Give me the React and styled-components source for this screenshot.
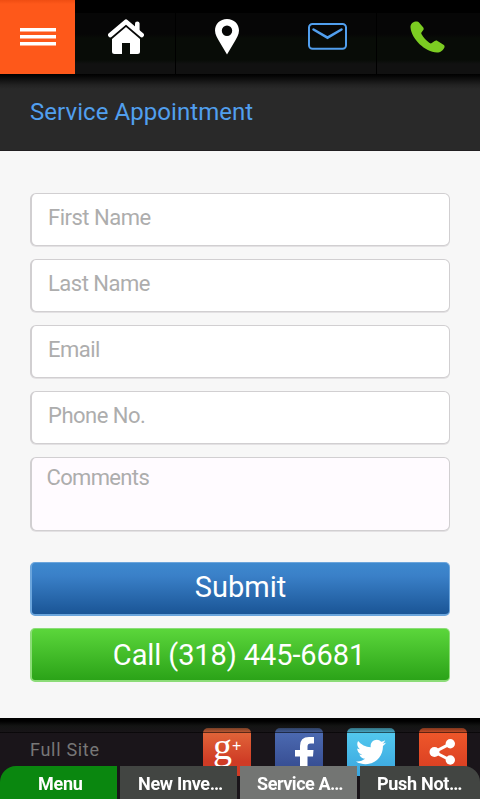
import styled, { createGlobalStyle } from "styled-components"
import { FaTwitter } from "react-icons/fa"

const GlobalStyle = createGlobalStyle`
  * {
    box-sizing: border-box;
  }

  body {
    margin: 0;
    overflow: hidden;
    background: #1a151a;
    font-family: Roboto, "Liberation Sans", sans-serif;
  }
`

const Page = styled.div`
  display: flex;
  flex-direction: column;
  width: 480px;
  height: 799px;
  overflow: hidden;
`

const NavBar = styled.nav`
  display: grid;
  grid-template-columns: 75px 101px 101px 100px 103px;
  height: 74px;
  background: linear-gradient(#000 0 13px, #060606 13px 34px, #080c07 38px 60px, #111 64px 74px);
`

const NavItem = styled.a`
  display: flex;
  justify-content: center;
  padding: ${(props) => props.$pad};
  background: ${(props) => (props.$active ? "linear-gradient(#f04d12, #fe581a 4px)" : "none")};
  border-right: ${(props) => (props.$divider ? "1px solid #000" : "none")};

  svg {
    display: block;
    flex: none;
  }
`

const TitleBar = styled.header`
  height: 77px;
  padding: 22px 30px 0;
  background: linear-gradient(#000 0, #050505 2px, #222 11px, #292929 15px);
  border-bottom: 1px solid #211f21;
`

const Title = styled.h1`
  margin: 0;
  color: #519fee;
  font-size: 24px;
  font-weight: 400;
  line-height: 32px;
  letter-spacing: 0.06px;
`

const Form = styled.form`
  display: flex;
  flex-direction: column;
  height: 567px;
  padding: 42px 30px 0;
  background: #f7f7f7;
`

const Field = styled.input`
  width: 100%;
  height: 53px;
  margin: 0 0 13px;
  padding: 0 16px 5px;
  color: #333;
  background: #fff;
  border: 1px solid #d1cfd1;
  border-left-width: 2px;
  border-radius: 6px;
  box-shadow: 0 1px 0 #e3e1e3;
  font: 400 22px Roboto, sans-serif;
  letter-spacing: -0.5px;
  outline: none;

  &::placeholder {
    color: #adadad;
    opacity: 1;
  }
`

const CommentsField = styled(Field).attrs({ as: "textarea" })`
  display: block;
  height: 74px;
  margin-bottom: 31px;
  padding: 7px 14px 7px 14.5px;
  background: #fffbff;
  letter-spacing: -0.65px;
  resize: none;
`

const Button = styled.button`
  width: 100%;
  height: 54px;
  margin-bottom: 12px;
  padding: ${(props) => props.$pad};
  color: #fff;
  background: ${(props) => props.$fill};
  border: 1px solid ${(props) => props.$edge};
  border-left-width: 2px;
  border-bottom-width: 2px;
  border-radius: 5px;
  font: 400 29px Roboto, sans-serif;
  letter-spacing: ${(props) => props.$spacing}px;
`

const Footer = styled.footer`
  position: relative;
  display: flex;
  justify-content: space-between;
  flex: 1;
  padding: 10px 13px 0 30px;
  background: #1a151a;

  /* inner shadow falling over the links */
  &::before {
    content: "";
    position: absolute;
    z-index: 1;
    inset: 0 0 auto;
    height: 15px;
    background: linear-gradient(#000 0, #000 3px, rgba(16, 20, 16, 0.65) 8px, rgba(16, 20, 16, 0.2) 14px, #0009 14px);
  }
`

const FullSite = styled.a`
  padding-top: 10px;
  color: #777;
  font-size: 18px;
  line-height: 24px;
  letter-spacing: 0.7px;
`

const SocialLinks = styled.div`
  display: flex;
  gap: 24px;
`

const SocialLink = styled.a`
  display: flex;
  justify-content: ${(props) => props.$align || "center"};
  width: 48px;
  height: 48px;
  padding: ${(props) => props.$pad || "0"};
  color: #fff;
  background: linear-gradient(${(props) => props.$fill});
  border-radius: 5px;

  svg {
    flex: none;
  }
`

const GooglePlus = styled.span`
  display: flex;
  height: 36px;
  font: 38px/29px "Liberation Serif", serif;
`

const Plus = styled.span`
  font: 16px/28px "Liberation Sans", sans-serif;
`

const TabBar = styled.div`
  position: fixed;
  z-index: 2;
  top: 766px;
  left: 0;
  display: grid;
  grid-template-columns: 117px 117px 117px 120px;
  gap: 3px;
  width: 480px;
  height: 33px;
`

const Tab = styled.a`
  padding-left: ${(props) => props.$indent}px;
  color: #fff;
  background: ${(props) => props.$color};
  border-radius: ${(props) => props.$radius || "0"};
  font-size: 18px;
  font-weight: 700;
  line-height: 35px;
  letter-spacing: ${(props) => props.$spacing}px;
  white-space: nowrap;
`

const MenuIcon = () => (
  <svg width="36" height="18" viewBox="0 0 36 18">
    <path d="M0 0h36v3.4H0zM0 7h36v3.4H0zM0 14h36v3.4H0z" fill="#fff" />
  </svg>
)

const HomeIcon = () => (
  <svg width="36" height="36" viewBox="0 0 36 36" fill="#fff">
    <path d="M27 12V4.500Q27 2.500 29.300 2.500T31.600 4.500V16z" />
    <path d="M2.300 16 18 2.700 33.700 16" fill="none" stroke="#fff" strokeWidth="4.500" strokeLinecap="round" strokeLinejoin="round" />
    <path d="M18 8 32 20V32.500q0 2.500-2.500 2.500H22V24h-8v11H6.500Q4 35 4 32.500V20z" />
  </svg>
)

const PinIcon = () => (
  <svg width="24" height="36" viewBox="0 0 24 36">
    <path
      d="M12 0C5 0 0 5 0 11.500 0 16 2.500 19 4 22l8 13.500L20 22c1.500-3 4-6 4-10.500C24 5 19 0 12 0zm0 6.500a5.200 5.200 0 1 1 0 10.400 5.200 5.200 0 0 1 0-10.400z"
      fill="#fff"
      fillRule="evenodd"
    />
  </svg>
)

const MailIcon = () => (
  <svg width="39" height="27" viewBox="0 0 39 27" fill="none" stroke="#519fee">
    <rect x="1" y="1" width="37" height="24.700" rx="3.500" strokeWidth="2" />
    <path d="M5.500 6.500 19.500 14.700 33.500 6.500" strokeWidth="2.500" strokeLinecap="round" />
  </svg>
)

const PhoneIcon = () => (
  <svg width="35" height="32" viewBox="0 0 35 32">
    <path
      d="M5.500.5C2.500.8.300 3.500.500 6.500 1.500 18 15 31 27 31.500c3 .1 6.500-2.200 7.500-5.300.3-1-.1-1.700-1-2.400L27.500 20c-1-.6-2-.5-2.800.1l-2.900 2c-.8.500-1.500.3-2.200-.2-3.500-2.500-6-5.200-8-8.600-.5-.9-.4-1.500.2-2.300l1.500-2c.6-.8.500-1.600 0-2.500L9 1.500C8.200.400 7 .300 5.500.5z"
      fill="#7ccc22"
    />
  </svg>
)

const FacebookIcon = () => (
  <svg width="19" height="39" viewBox="0 0 19 39" fill="#fff">
    <path d="M19 0v6.500h-3.500Q12.500 6.500 12.500 9.500V13H18.500L18 19.500H12.500V39H5V19.500H0V13H5V9Q5 0 14 0z" />
  </svg>
)

const ShareIcon = () => (
  <svg width="28" height="28" viewBox="0 0 28 28" fill="#fff">
    <path d="M21 5.800 5.500 14 21 22" fill="none" stroke="#fff" strokeWidth="3" />
    <circle cx="5.500" cy="14" r="5" />
    <circle cx="21.300" cy="5.800" r="4.700" />
    <circle cx="21.300" cy="22" r="4.700" />
  </svg>
)

const App = () => {
  return (
    <>
      <GlobalStyle />
      <Page>
        <NavBar>
          <NavItem $active $pad="28px 0 0">
            <MenuIcon />
          </NavItem>
          <NavItem $divider $pad="19px 0 0 2px">
            <HomeIcon />
          </NavItem>
          <NavItem $pad="19px 0 0">
            <PinIcon />
          </NavItem>
          <NavItem $divider $pad="23px 0 0 2px">
            <MailIcon />
          </NavItem>
          <NavItem $pad="20.500px 2px 0 0">
            <PhoneIcon />
          </NavItem>
        </NavBar>

        <TitleBar>
          <Title>Service Appointment</Title>
        </TitleBar>

        <Form onSubmit={(e) => e.preventDefault()}>
          <Field placeholder="First Name" />
          <Field placeholder="Last Name" />
          <Field placeholder="Email" />
          <Field placeholder="Phone No." />
          <CommentsField placeholder="Comments" />
          <Button $fill="linear-gradient(#3e89ce, #3a80c8 25%, #1a5596)" $edge="#6ba5dc" $spacing={0} $pad="0 0 4px">
            Submit
          </Button>
          <Button type="button" $fill="linear-gradient(#5bd63b, #2ba318)" $edge="#8cdc78" $spacing={-0.1} $pad="0 3px 0 0">
            Call (318) 445-6681
          </Button>
        </Form>

        <Footer>
          <FullSite>Full Site</FullSite>
          <SocialLinks>
            <SocialLink $fill="#e36b3c, #cf3b25 70%" $align="flex-start" $pad="4px 0 0 10px">
              <GooglePlus>
                g<Plus>+</Plus>
              </GooglePlus>
            </SocialLink>
            <SocialLink $fill="#4e6db5, #32478b" $align="flex-end" $pad="9px 9px 0 0">
              <FacebookIcon />
            </SocialLink>
            <SocialLink $fill="#55ccf0, #3aa5df" $pad="9px 0 0">
              <FaTwitter size={30} />
            </SocialLink>
            <SocialLink $fill="#f15a2b, #d63b21" $pad="10px 0 0">
              <ShareIcon />
            </SocialLink>
          </SocialLinks>
        </Footer>
      </Page>

      <TabBar>
        <Tab $color="#0a870f" $indent={38} $radius="16px 0 0 0" $spacing={-0.3}>
          Menu
        </Tab>
        <Tab $color="#424542" $indent={18} $spacing={-0.3}>
          New Inve…
        </Tab>
        <Tab $color="#737573" $indent={17} $spacing={-0.45}>
          Service A…
        </Tab>
        <Tab $color="#424542" $indent={17} $radius="0 16px 0 0" $spacing={-0.3}>
          Push Not…
        </Tab>
      </TabBar>
    </>
  )
}

export default App
